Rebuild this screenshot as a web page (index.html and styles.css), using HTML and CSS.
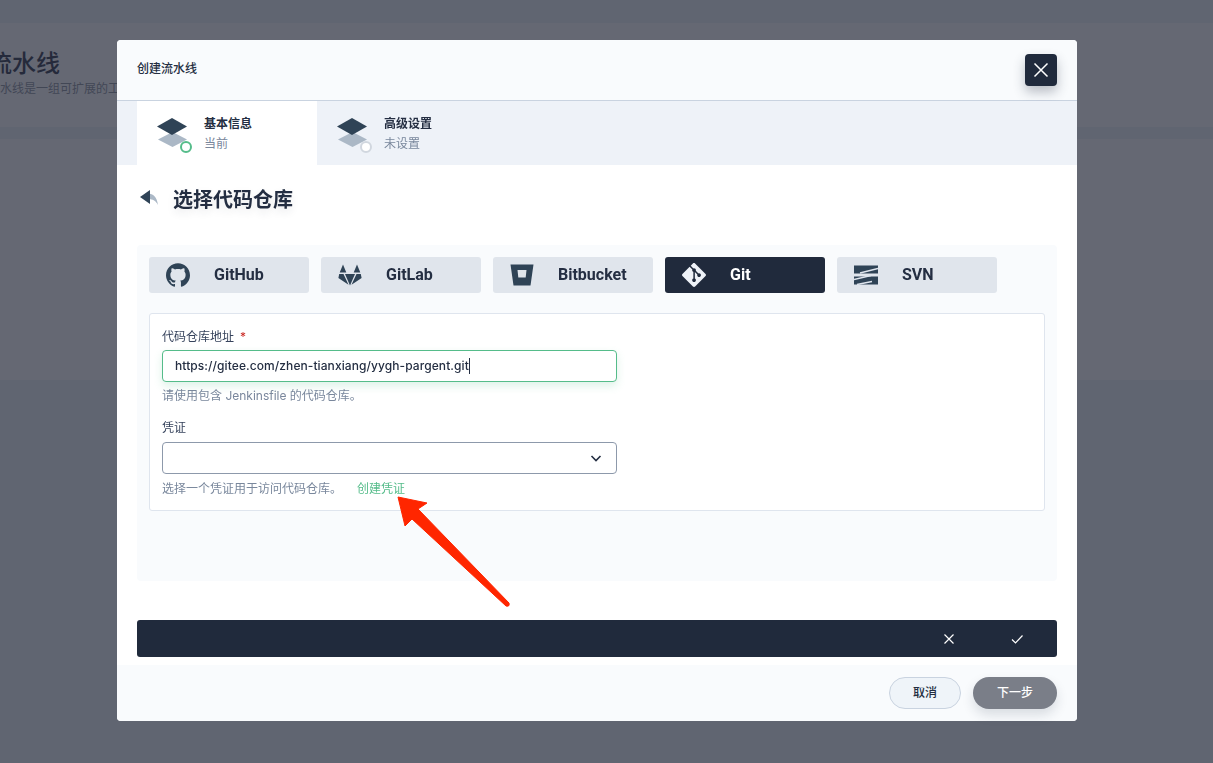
FILE: index.html
```html
<!DOCTYPE html>
<html lang="en">
<head>
  <meta charset="UTF-8">
  <meta name="viewport" content="width=device-width, initial-scale=1.0">
  <title>创建流水线</title>
  <link rel="stylesheet" href="styles.css">
</head>
<body>
  <!-- page behind the dialog -->
  <div class="page">
    <div class="page-head">
      <h1>流水线</h1>
      <p>流水线是一组可扩展的工具</p>
    </div>
    <div class="page-panel"></div>
  </div>
  <div class="mask"></div>

  <div class="modal">
    <div class="modal-head">
      <span class="modal-title">创建流水线</span>
      <button class="close" type="button">
        <svg width="16" height="16" viewBox="0 0 16 16"><path d="M1.5 1.5l13 13M14.5 1.5l-13 13" stroke="#fff" stroke-width="1.5" fill="none"/></svg>
      </button>
    </div>

    <div class="steps">
      <div class="step active">
        <svg class="step-icon" width="36" height="36" viewBox="0 0 36 36">
          <path d="M1 14.5L15.5 7 30 14.500 15.500 22z" fill="#abb8c6" transform="translate(0 7)"/>
          <path d="M0 8.500L15 0l15 8.500L15 17z" fill="#2f4356"/>
          <circle cx="29" cy="29" r="5" fill="#fff" stroke="#55bc8a" stroke-width="2"/>
        </svg>
        <div>
          <div class="step-title">基本信息</div>
          <div class="step-desc">当前</div>
        </div>
      </div>
      <div class="step">
        <svg class="step-icon" width="36" height="36" viewBox="0 0 36 36">
          <path d="M1 14.5L15.5 7 30 14.500 15.500 22z" fill="#abb8c6" transform="translate(0 7)"/>
          <path d="M0 8.500L15 0l15 8.500L15 17z" fill="#2f4356"/>
          <circle cx="29" cy="29" r="5" fill="#fff" stroke="#d1d7df" stroke-width="2"/>
        </svg>
        <div>
          <div class="step-title">高级设置</div>
          <div class="step-desc">未设置</div>
        </div>
      </div>
    </div>

    <div class="modal-body">
      <div class="section-title">
        <svg width="20" height="16" viewBox="0 0 20 16">
          <path d="M8 3.500c5 0 9 3.500 10 11.500-2-4-5-6-10-6z" fill="#abb8c6"/>
          <path d="M10 0v14L0 7z" fill="#2f4356"/>
        </svg>
        <span>选择代码仓库</span>
      </div>

      <div class="panel">
        <div class="tabs">
          <div class="tab">
            <svg class="tab-icon" viewBox="0 0 24 24"><path fill="#2f4356" d="M12 .297c-6.630 0-12 5.373-12 12 0 5.303 3.438 9.800 8.205 11.385.6.113.82-.258.82-.577 0-.285-.01-1.040-.015-2.040-3.338.724-4.042-1.610-4.042-1.610C4.422 18.070 3.633 17.700 3.633 17.700c-1.087-.744.084-.729.084-.729 1.205.084 1.838 1.236 1.838 1.236 1.070 1.835 2.809 1.305 3.495.998.108-.776.417-1.305.76-1.605-2.665-.3-5.466-1.332-5.466-5.930 0-1.310.465-2.380 1.235-3.220-.135-.303-.54-1.523.105-3.176 0 0 1.005-.322 3.300 1.230.96-.267 1.980-.399 3-.405 1.020.006 2.040.138 3 .405 2.280-1.552 3.285-1.230 3.285-1.230.645 1.653.24 2.873.12 3.176.765.84 1.230 1.910 1.230 3.220 0 4.610-2.805 5.625-5.475 5.920.42.36.81 1.096.81 2.220 0 1.606-.015 2.896-.015 3.286 0 .315.21.69.825.57C20.565 22.092 24 17.592 24 12.297c0-6.627-5.373-12-12-12"/></svg>
            <span>GitHub</span>
          </div>
          <div class="tab">
            <svg class="tab-icon" viewBox="0 0 24 24"><path fill="#2f4356" d="M5 1.500L8.300 9.500H1.700zM19 1.500l3.300 8h-6.600zM7 11h10l-5 11.500zM1.200 11h4.300l5 10.800L.4 15z M22.800 11h-4.300l-5 10.800L23.600 15z"/></svg>
            <span>GitLab</span>
          </div>
          <div class="tab">
            <svg class="tab-icon" viewBox="0 0 24 24"><path fill="#2f4356" fill-rule="evenodd" d="M.5 1.500h23l-3 21H3.500zM7.500 7l.8 7.500h7.400L16.500 7z"/></svg>
            <span>Bitbucket</span>
          </div>
          <div class="tab selected">
            <svg class="tab-icon" viewBox="0 0 24 24"><path fill="#eef2f8" d="M23.546 10.930L13.067.452c-.604-.603-1.582-.603-2.188 0L8.708 2.627l2.760 2.760c.645-.215 1.379-.07 1.889.441.516.515.658 1.258.438 1.900l2.658 2.660c.645-.223 1.387-.078 1.900.435.721.72.721 1.884 0 2.604-.719.719-1.881.719-2.600 0-.539-.541-.674-1.337-.404-1.996L12.860 8.955v6.525c.176.086.342.203.488.348.713.721.713 1.883 0 2.600-.719.721-1.889.721-2.609 0-.719-.719-.719-1.879 0-2.598.182-.18.387-.316.605-.406V8.835c-.217-.091-.424-.222-.6-.401-.545-.545-.676-1.342-.396-2.009L7.636 3.700.45 10.881c-.6.605-.6 1.584 0 2.189l10.480 10.477c.604.604 1.582.604 2.186 0l10.430-10.430c.605-.603.605-1.582 0-2.187"/></svg>
            <span>Git</span>
          </div>
          <div class="tab">
            <svg class="tab-icon" viewBox="0 0 24 24">
              <path fill="#2f4356" d="M0 2.500h24v8H0zM0 13.500h24v8H0z"/>
              <path d="M6 10L24 5.500M0 16.500L17 12.500M3 21.500L18 18.500" stroke="#dfe5ee" stroke-width="1.300" fill="none"/>
            </svg>
            <span>SVN</span>
          </div>
        </div>

        <div class="form-box">
          <div class="field">
            <div class="label">代码仓库地址<i>*</i></div>
            <div class="input focus"><span class="value">https://gitee.com/zhen-tianxiang/yygh-pargent.git</span></div>
            <div class="help">请使用包含 Jenkinsfile 的代码仓库。</div>
          </div>
          <div class="field">
            <div class="label">凭证</div>
            <div class="input select">
              <svg width="12" height="12" viewBox="0 0 12 12"><path d="M1.500 4L6 8.500 10.500 4" stroke="#242e42" stroke-width="1.600" fill="none"/></svg>
            </div>
            <div class="help">选择一个凭证用于访问代码仓库。<a class="link">创建凭证</a></div>
          </div>
        </div>
      </div>

      <div class="confirm-bar">
        <svg width="12" height="12" viewBox="0 0 12 12"><path d="M1.500 1.500l9 9M10.500 1.500l-9 9" stroke="#fff" stroke-width="1.200" fill="none"/></svg>
        <svg width="12" height="12" viewBox="0 0 12 12"><path d="M1 6.500l3.500 3.500L11.500 2.500" stroke="#fff" stroke-width="1.200" fill="none"/></svg>
      </div>
    </div>

    <div class="modal-foot">
      <button class="btn" type="button">取消</button>
      <button class="btn primary" type="button">下一步</button>
    </div>
  </div>

  <!-- annotation arrow drawn on the screenshot -->
  <svg class="arrow" width="120" height="116" viewBox="0 0 120 116">
    <path d="M3 4L32 10 23 16 114 110Q115 114 111 113L17 26 10 33z" fill="#ff2600" stroke="#ff2600" stroke-width="1" stroke-linejoin="round"/>
  </svg>
</body>
</html>
```

FILE: styles.css
```css
* {
  padding: 0;
  margin: 0;
  box-sizing: border-box;
}

html, body {
  height: 100%;
  overflow: hidden;
}

body {
  background-color: #eff4f9;
  color: #242e42;
  font-family: Inter, "Noto Sans CJK SC", sans-serif;
  font-size: 12px;
}

button {
  font-family: inherit;
  border: 0;
}

.page {
  padding-top: 23px;
}

.page-head {
  height: 104px;
  padding: 25px 0 0;
  margin-bottom: 12px;
  background-color: #fff;
  overflow: hidden;
}

.page-head h1 {
  margin-left: -12px;
  font-size: 24px;
  line-height: 31px;
  font-weight: 500;
  color: #2a3044;
}

.page-head p {
  margin-left: -12px;
  line-height: 20px;
  color: #8a8f9c;
}

.page-panel {
  height: 241px;
  background-color: #fff;
}

.mask {
  position: fixed;
  top: 0;
  right: 0;
  bottom: 0;
  left: 0;
  background-color: rgba(36, 40, 56, .7);
}

.modal {
  position: fixed;
  top: 40px;
  left: 117px;
  width: 960px;
  height: 681px;
  display: flex;
  flex-direction: column;
  border-radius: 4px;
  background-color: #fff;
}

.modal-head {
  display: flex;
  align-items: center;
  justify-content: space-between;
  height: 61px;
  padding: 0 20px;
  border-bottom: 1px solid #c9d3e0;
  border-radius: 4px 4px 0 0;
  background-color: #f9fbfd;
  font-weight: 500;
}

.modal-title {
  padding-bottom: 5px;
}

.close {
  display: flex;
  align-items: center;
  justify-content: center;
  width: 32px;
  height: 32px;
  border-radius: 4px;
  background-color: #202a3c;
  box-shadow: 0 6px 12px rgba(36, 46, 66, .3);
}

.steps {
  display: flex;
  height: 64px;
  padding-left: 20px;
  background-color: #eef2f8;
}

.step {
  display: flex;
  width: 180px;
  padding: 13px 0 0 20px;
  line-height: 20px;
}

.step.active {
  background-color: #fff;
}

.step-icon {
  flex: none;
  margin: 4px 11px 0 0;
}

.step-title {
  font-weight: 600;
}

.step-desc {
  color: #79879c;
}

.modal-body {
  flex: 1;
  padding: 20px 20px 8px;
}

.section-title {
  display: flex;
  align-items: center;
  gap: 13px;
  height: 28px;
  margin-bottom: 32px;
  padding: 0 0 2px 3px;
  font-size: 20px;
  font-weight: 600;
  text-shadow: 0 4px 8px rgba(36, 46, 66, .1);
}

.panel {
  height: 336px;
  padding: 12px;
  border-radius: 4px;
  background-color: #f9fbfd;
}

.tabs {
  display: flex;
  gap: 12px;
  margin-bottom: 20px;
}

.tab {
  display: flex;
  align-items: center;
  gap: 24px;
  width: 160px;
  height: 36px;
  padding-left: 17px;
  border-radius: 3px;
  background-color: #e0e5ec;
  font-family: Roboto, "Noto Sans CJK SC", sans-serif;
  font-size: 16px;
  font-weight: 700;
}

.tab span {
  padding-bottom: 2px;
}

.tab.selected {
  background-color: #202a3c;
  color: #fff;
}

.tab-icon {
  flex: none;
  width: 24px;
  height: 24px;
}

.form-box {
  padding: 12px;
  border: 1px solid #dfe5ee;
  border-radius: 3px;
  background-color: #fff;
}

.field + .field {
  margin-top: 11px;
}

.label {
  margin-bottom: 3px;
  padding-top: 1px;
  line-height: 20px;
  color: #36435c;
}

.field + .field .label {
  margin-bottom: 4px;
}

.label i {
  margin-left: 6px;
  font-style: normal;
  color: #ca2621;
}

.input {
  display: flex;
  align-items: center;
  width: 455px;
  height: 32px;
  padding: 0 12px;
  border: 1px solid #8d99ab;
  border-radius: 4px;
  background-color: #fff;
}

.input.focus {
  border-color: #55bc8a;
  box-shadow: 0 4px 8px rgba(85, 188, 138, .2);
}

.input.select {
  justify-content: flex-end;
  padding-right: 14px;
}

.value {
  border-right: 1px solid #242e42;
  font-weight: 500;
  line-height: 16px;
  letter-spacing: .08px;
}

.help {
  margin-top: 4px;
  line-height: 20px;
  color: #79879c;
}

.field + .field .help {
  margin-top: 5px;
  line-height: 19px;
}

.link {
  margin-left: 15px;
  color: #55bc8a;
}

.confirm-bar {
  display: flex;
  justify-content: flex-end;
  align-items: center;
  gap: 56px;
  height: 37px;
  margin-top: 39px;
  padding-right: 34px;
  border-radius: 3px;
  background-color: #202a3c;
}

.modal-foot {
  display: flex;
  justify-content: flex-end;
  gap: 12px;
  height: 56px;
  padding: 12px 20px;
  border-radius: 0 0 4px 4px;
  background-color: #f9fbfd;
}

.btn {
  width: 72px;
  height: 32px;
  padding-bottom: 3px;
  border: 1px solid #c9d3e0;
  border-radius: 16px;
  background-color: #eff4f9;
  color: #242e42;
  font-size: 12px;
  font-weight: 500;
}

.btn.primary {
  width: 84px;
  border: 0;
  background-color: #7a7e88;
  color: #fff;
  box-shadow: 0 6px 12px rgba(36, 46, 66, .15);
}

.arrow {
  position: fixed;
  top: 493px;
  left: 395px;
}
```
